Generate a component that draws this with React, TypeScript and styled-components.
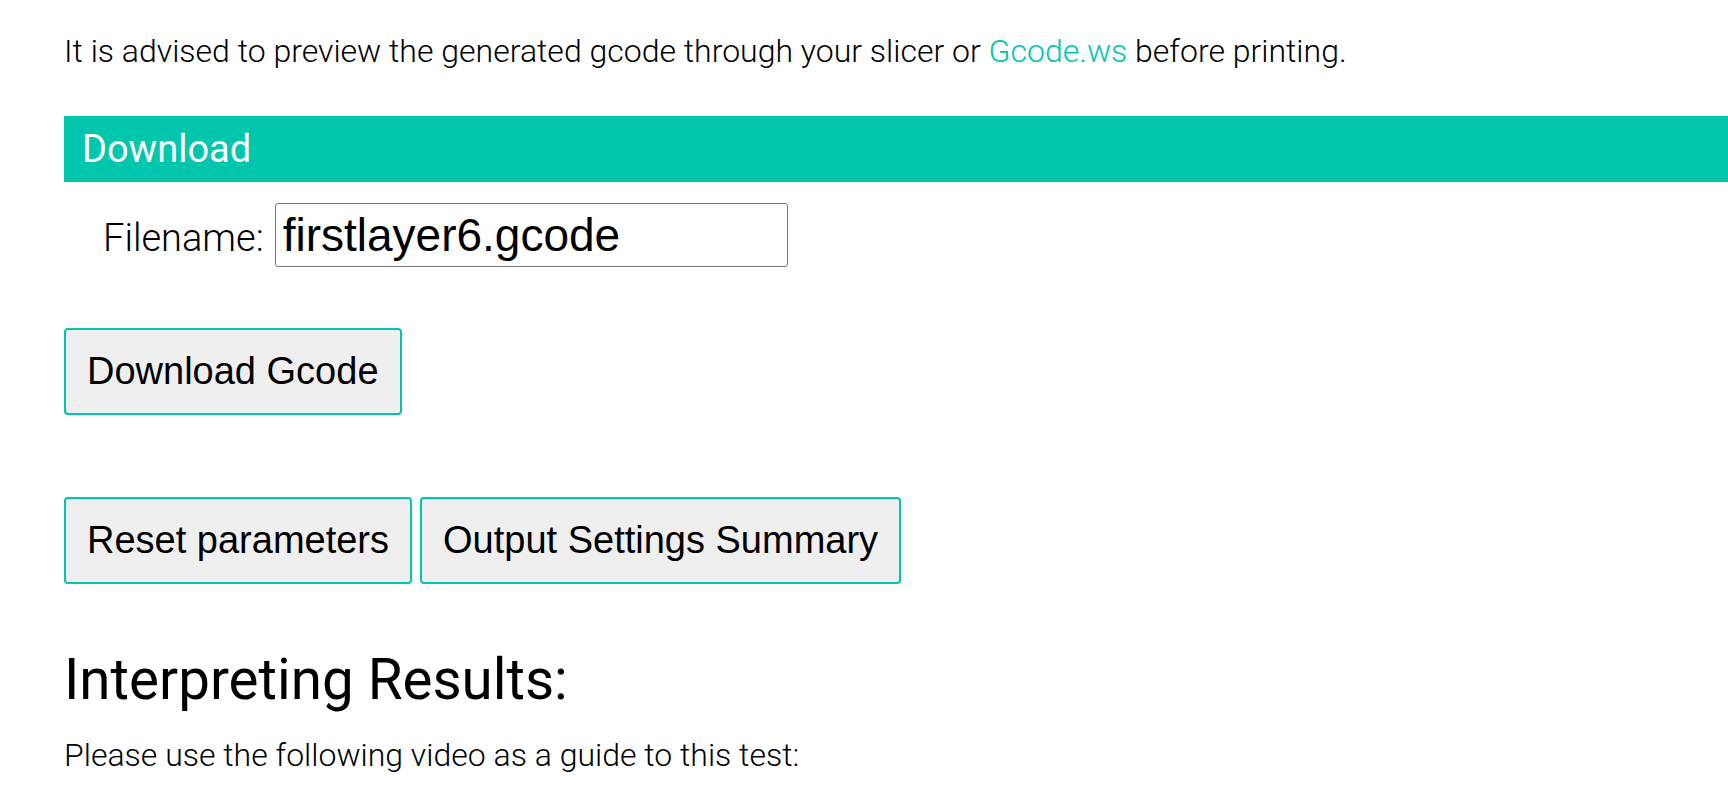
import React from "react";
import styled, { createGlobalStyle } from "styled-components";

const TEAL = "#00c6ae";

const Global = createGlobalStyle`
  html, body { margin: 0; padding: 0; background: #ffffff; }
  body { font-family: Roboto, "Noto Sans", sans-serif; color: #000; }
`;

const Page = styled.div`
  display: flex;
  flex-direction: column;
  align-items: flex-start;
  padding: 32px 0 0 64px;
  font-weight: 300;
`;

const Text = styled.p<{ $top?: number }>`
  margin: ${(p) => p.$top ?? 0}px 0 0 0;
  font-size: 32px;
  line-height: 38px;
  font-weight: 300;
  white-space: nowrap;
`;

const Link = styled.a`
  color: ${TEAL};
  text-decoration: none;
`;

const Banner = styled.div`
  align-self: stretch;
  margin-top: 46px;
  height: 66px;
  box-sizing: border-box;
  padding: 0 18px;
  display: flex;
  align-items: center;
  background: ${TEAL};
  color: #ffffff;
  font-size: 38px;
  font-weight: 400;
`;

const FieldRow = styled.div`
  margin-top: 21px;
  padding-left: 39px;
  display: flex;
  align-items: baseline;
  gap: 11px;
`;

const Label = styled.label`
  font-size: 38px;
  font-weight: 300;
`;

const Input = styled.input`
  width: 513px;
  height: 64px;
  box-sizing: border-box;
  padding: 0 7px;
  border: 1px solid #767676;
  border-radius: 3px;
  font-family: "Liberation Sans", Arial, sans-serif;
  font-size: 46px;
  color: #000;
  background: #fff;
  outline: none;
`;

const ButtonRow = styled.div<{ $top: number }>`
  margin-top: ${(p) => p.$top}px;
  display: flex;
  gap: 8px;
`;

const Button = styled.button`
  height: 87px;
  box-sizing: border-box;
  padding: 0 21px;
  border: 2px solid ${TEAL};
  border-radius: 4px;
  background: #efefef;
  color: #000;
  font-family: "Liberation Sans", Arial, sans-serif;
  font-size: 38px;
  cursor: pointer;
`;

const Heading = styled.h2`
  margin: 63px 0 0 0;
  font-size: 56.5px;
  line-height: 67px;
  font-weight: 400;
  white-space: nowrap;
`;

export default function App() {
  return (
    <>
      <Global />
      <Page>
        <Text>
          It is advised to preview the generated gcode through your slicer or{" "}
          <Link href="#">Gcode.ws</Link> before printing.
        </Text>
        <Banner>Download</Banner>
        <FieldRow>
          <Label htmlFor="fname">Filename:</Label>
          <Input id="fname" defaultValue="firstlayer6.gcode" />
        </FieldRow>
        <ButtonRow $top={61}>
          <Button>Download Gcode</Button>
        </ButtonRow>
        <ButtonRow $top={82}>
          <Button>Reset parameters</Button>
          <Button>Output Settings Summary</Button>
        </ButtonRow>
        <Heading>Interpreting Results:</Heading>
        <Text $top={22}>Please use the following video as a guide to this test:</Text>
      </Page>
    </>
  );
}
